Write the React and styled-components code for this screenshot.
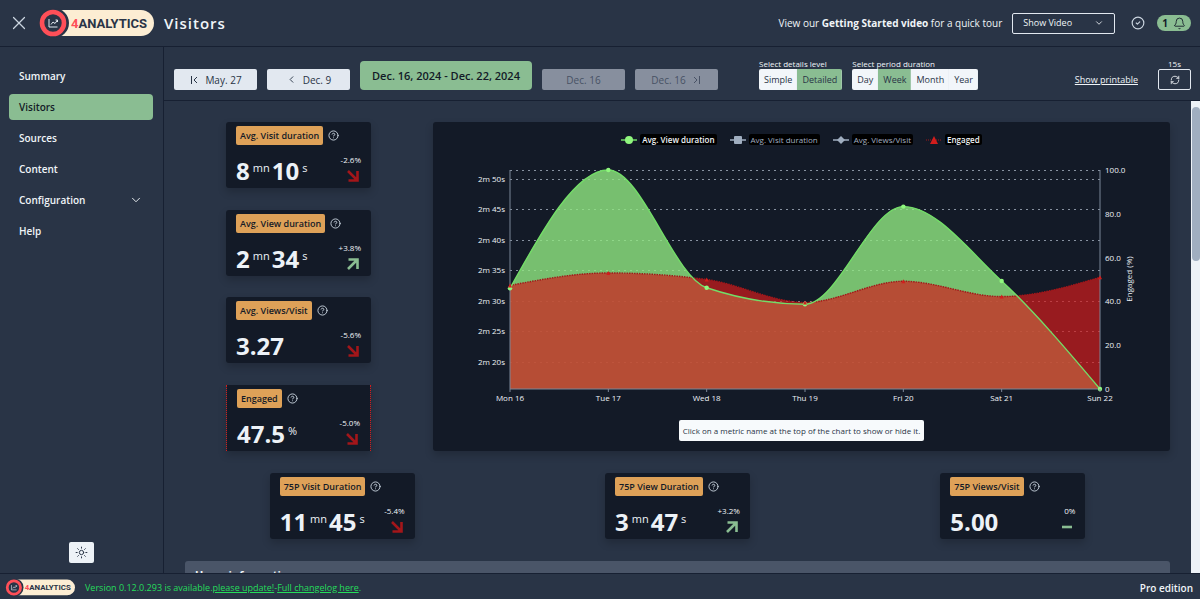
import { useState } from "react";
import { createGlobalStyle, styled } from "styled-components";
import {
  Bell,
  ChevronDown,
  ChevronLeft,
  CircleCheck,
  CircleHelp,
  RefreshCw,
  Sun,
  X,
} from "lucide-react";

const menu = ["Summary", "Visitors", "Sources", "Content", "Configuration", "Help"];

const sideCards = [
  {
    title: "Avg. Visit duration",
    parts: [["8", "mn"], ["10", "s"]],
    change: "-2.6%",
    trend: "down",
  },
  {
    title: "Avg. View duration",
    parts: [["2", "mn"], ["34", "s"]],
    change: "+3.8%",
    trend: "up",
  },
  {
    title: "Avg. Views/Visit",
    parts: [["3.27", ""]],
    change: "-5.6%",
    trend: "down",
  },
  {
    title: "Engaged",
    parts: [["47.5", "%"]],
    change: "-5.0%",
    trend: "down",
    dotted: true,
  },
];

const bottomCards = [
  {
    title: "75P Visit Duration",
    parts: [["11", "mn"], ["45", "s"]],
    change: "-5.4%",
    trend: "down",
  },
  {
    title: "75P View Duration",
    parts: [["3", "mn"], ["47", "s"]],
    change: "+3.2%",
    trend: "up",
  },
  {
    title: "75P Views/Visit",
    parts: [["5.00", ""]],
    change: "0%",
    trend: "flat",
  },
];

const trends = {
  down: { d: "M1 1l9 9M10.5 1v9.500H1.500", color: "#a3161a" },
  up: { d: "M1 11l9-9M1.500 1.500h9V11", color: "#8abd92" },
  flat: { d: "M1 6h10", color: "#8abd92" },
};

const days = ["Mon 16", "Tue 17", "Wed 18", "Thu 19", "Fri 20", "Sat 21", "Sun 22"];
// average view duration, in seconds
const viewDuration = [152, 171.4, 152.1, 149.4, 165.4, 153.2, 135.5];
// engaged visitors, in percent
const engaged = [47.3, 53, 50, 39.5, 49.2, 42.2, 51];

const plot = { left: 77, right: 667, top: 19, bottom: 238 };
const xAt = (i) => plot.left + (i * (plot.right - plot.left)) / 6;
const secondsY = (s) =>
  plot.bottom - ((s - 135.5) / (171.4 - 135.5)) * (plot.bottom - plot.top);
const percentY = (p) => plot.bottom - (p / 100) * (plot.bottom - plot.top);

// monotone cubic through the points, so that the curve never overshoots
function smoothPath(points) {
  const last = points.length - 1;
  const slope = points
    .slice(1)
    .map(([x, y], i) => (y - points[i][1]) / (x - points[i][0]));
  const tangent = points.map((_, i) => {
    const a = slope[i - 1];
    const b = slope[i];
    if (i === 0 || i === last || a * b <= 0) return 0;
    return (
      Math.sign(a) * 2 * Math.min(Math.abs(a), Math.abs(b), Math.abs(a + b) / 4)
    );
  });
  tangent[0] = (3 * slope[0] - tangent[1]) / 2;
  tangent[last] = (3 * slope[last - 1] - tangent[last - 1]) / 2;

  let d = `M${points[0][0]},${points[0][1]}`;
  for (let i = 0; i < last; i++) {
    const [x0, y0] = points[i];
    const [x1, y1] = points[i + 1];
    const dx = (x1 - x0) / 3;
    d += `C${x0 + dx},${y0 + dx * tangent[i]} ${x1 - dx},${
      y1 - dx * tangent[i + 1]
    } ${x1},${y1}`;
  }
  return d;
}

const Logo = ({ small }) => (
  <LogoSvg $small={small} viewBox="0 0 114 28" role="img" aria-label="4Analytics">
    <rect x="6" y="1" width="108" height="26" rx="13" fill="#fcedd3" />
    <circle cx="14" cy="14" r="15" fill="#293446" />
    <circle cx="13" cy="14" r="11" fill="#293446" stroke="#ff4f58" strokeWidth="4.6" />
    <path
      d="M9 10v8h8.500M11 15.500l2-2.500 2 1.500 2.500-3.500M15.500 11h2v2"
      fill="none"
      stroke="#e2e8f0"
      strokeWidth="1"
    />
    <text x="31" y="19" fontSize="13" fontWeight="700" fill="#293446">
      <tspan fill="#ff4f58">4</tspan>ANALYTICS
    </text>
  </LogoSvg>
);

const EdgeIcon = ({ flip }) => (
  <EdgeSvg $flip={flip} viewBox="0 0 10 10">
    <path d="M2.5 1v8M8 2L5 5l3 3" />
  </EdgeSvg>
);

const MetricCard = ({ card }) => (
  <Card $dotted={card.dotted}>
    <CardHead>
      <Badge>{card.title}</Badge>
      <CircleHelp size={11} strokeWidth={2} />
    </CardHead>
    <CardBody>
      <Value>
        {card.parts.map(([number, unit]) => (
          <span key={number}>
            {number}
            {unit && <Unit>{unit}</Unit>}
          </span>
        ))}
      </Value>
      <Change>
        {card.change}
        <svg width="12" height="12" viewBox="0 0 12 12">
          <path
            d={trends[card.trend].d}
            fill="none"
            stroke={trends[card.trend].color}
            strokeWidth="2.6"
          />
        </svg>
      </Change>
    </CardBody>
  </Card>
);

const Choice = ({ legend, name, options, value, onChange }) => (
  <ChoiceSet>
    <legend>{legend}</legend>
    <Segments>
      {options.map((option) => (
        <Segment key={option} $active={option === value}>
          <input
            type="radio"
            name={name}
            checked={option === value}
            onChange={() => onChange(option)}
          />
          {option}
        </Segment>
      ))}
    </Segments>
  </ChoiceSet>
);

const Chart = () => {
  const [shown, setShown] = useState({ view: true, engaged: true });
  const viewPoints = viewDuration.map((v, i) => [xAt(i), secondsY(v)]);
  const engagedPoints = engaged.map((v, i) => [xAt(i), percentY(v)]);
  const viewLine = smoothPath(viewPoints);
  const engagedLine = smoothPath(engagedPoints);
  const close = `L${plot.right},${plot.bottom}L${plot.left},${plot.bottom}Z`;
  const ticks = [140, 145, 150, 155, 160, 165, 170];

  function toggle(key) {
    setShown((prev) => ({ ...prev, [key]: !prev[key] }));
  }

  return (
    <ChartPanel>
      <Legend>
        <LegendItem $on={shown.view} onClick={() => toggle("view")}>
          <svg width="16" height="10" viewBox="0 0 16 10">
            <path d="M0 5h16" stroke="#6fd866" strokeWidth="1.5" />
            <circle cx="8" cy="5" r="4" fill="#90f77e" />
          </svg>
          <span>Avg. View duration</span>
        </LegendItem>
        <LegendItem $on={shown.visit} onClick={() => toggle("visit")}>
          <svg width="16" height="10" viewBox="0 0 16 10">
            <path d="M0 5h16" stroke="#a0aec0" strokeWidth="1.5" />
            <rect x="4" y="1" width="8" height="8" rx="1" fill="#a0aec0" />
          </svg>
          <span>Avg. Visit duration</span>
        </LegendItem>
        <LegendItem $on={shown.pages} onClick={() => toggle("pages")}>
          <svg width="16" height="10" viewBox="0 0 16 10">
            <path d="M0 5h16" stroke="#a0aec0" strokeWidth="1.5" />
            <path d="M8 1l4 4-4 4-4-4z" fill="#a0aec0" />
          </svg>
          <span>Avg. Views/Visit</span>
        </LegendItem>
        <LegendItem $on={shown.engaged} onClick={() => toggle("engaged")}>
          <svg width="16" height="10" viewBox="0 0 16 10">
            <path d="M0 5h16" stroke="#a3161a" strokeDasharray="1 1" />
            <path d="M8 1l4 8H4z" fill="#d21d1c" />
          </svg>
          <span>Engaged</span>
        </LegendItem>
      </Legend>
      <ChartSvg viewBox="0 0 737 260">
        {[...ticks.map(secondsY), plot.top].map((y) => (
          <path
            key={y}
            d={`M${plot.left},${Math.round(y) + 0.5}H${plot.right}`}
            stroke="#8791a0"
            strokeDasharray="2 4"
          />
        ))}
        {shown.view && <path d={viewLine + close} fill="#91e882" fillOpacity="0.8" />}
        {shown.engaged && (
          <>
            <path d={engagedLine + close} fill="#d21d1c" fillOpacity="0.7" />
            <path
              d={engagedLine}
              fill="none"
              stroke="#a3161a"
              strokeWidth="1.4"
              strokeDasharray="1.5 1"
            />
          </>
        )}
        {shown.view && <path d={viewLine} fill="none" stroke="#73dd68" strokeWidth="1.4" />}
        <path
          d={`M${plot.left},${plot.top}V${plot.bottom}H${plot.right}V${plot.top}`}
          fill="none"
          stroke="#7b8698"
        />
        {shown.view &&
          viewPoints.map(([x, y]) => <circle key={x} cx={x} cy={y} r="2.2" fill="#90f77e" />)}
        {shown.engaged &&
          engagedPoints.map(([x, y]) => (
            <path key={x} d={`M${x},${y - 2}l2,4h-4z`} fill="#d21d1c" />
          ))}
        {ticks.map((s) => (
          <text key={s} x="72" y={secondsY(s) + 3} textAnchor="end">
            2m {s - 120}s
          </text>
        ))}
        {[0, 20, 40, 60, 80, 100].map((p) => (
          <text key={p} x="672" y={percentY(p) + 3}>
            {p ? p.toFixed(1) : 0}
          </text>
        ))}
        {days.map((day, i) => (
          <g key={day}>
            <path d={`M${xAt(i)},${plot.bottom}v3`} stroke="#7b8698" />
            <text x={xAt(i)} y="250" textAnchor="middle">
              {day}
            </text>
          </g>
        ))}
        <text transform="translate(699 128) rotate(-90)" textAnchor="middle">
          Engaged (%)
        </text>
      </ChartSvg>
      <Hint>Click on a metric name at the top of the chart to show or hide it.</Hint>
    </ChartPanel>
  );
};

const App = () => {
  const [page, setPage] = useState("Visitors");
  const [level, setLevel] = useState("Detailed");
  const [period, setPeriod] = useState("Week");

  return (
    <Page>
      <GlobalStyle />
      <Header>
        <IconBtn aria-label="Close">
          <X size={22} strokeWidth={1.3} />
        </IconBtn>
        <Logo />
        <h1>{page}</h1>
        <Tour>
          <label htmlFor="video">
            View our <b>Getting Started video</b> for a quick tour
          </label>
          <SelectBox>
            <select id="video">
              <option>Show Video</option>
            </select>
            <ChevronDown size={10} />
          </SelectBox>
        </Tour>
        <IconBtn aria-label="Status">
          <CircleCheck size={14} strokeWidth={2} />
        </IconBtn>
        <Alerts aria-label="Notifications">
          1 <Bell size={13} strokeWidth={1.6} />
        </Alerts>
      </Header>

      <Main>
        <Sidebar>
          <nav>
            {menu.map((item) => (
              <MenuLink
                key={item}
                href={`#${item}`}
                $active={item === page}
                onClick={() => setPage(item)}
              >
                {item}
                {item === "Configuration" && <ChevronDown size={14} strokeWidth={1.6} />}
              </MenuLink>
            ))}
          </nav>
          <ThemeBtn aria-label="Theme">
            <Sun size={13} strokeWidth={1.8} />
          </ThemeBtn>
        </Sidebar>

        <Content>
          <Toolbar>
            <DateBtn>
              <EdgeIcon /> May. 27
            </DateBtn>
            <DateBtn>
              <ChevronLeft size={11} /> Dec. 9
            </DateBtn>
            <RangeBtn>Dec. 16, 2024 - Dec. 22, 2024</RangeBtn>
            <DateBtn disabled>Dec. 16</DateBtn>
            <DateBtn disabled>
              Dec. 16 <EdgeIcon flip />
            </DateBtn>
            <Filters>
              <Choice
                legend="Select details level"
                name="level"
                options={["Simple", "Detailed"]}
                value={level}
                onChange={setLevel}
              />
              <Choice
                legend="Select period duration"
                name="period"
                options={["Day", "Week", "Month", "Year"]}
                value={period}
                onChange={setPeriod}
              />
            </Filters>
            <PrintLink href="#print">Show printable</PrintLink>
            <Refresh>
              15s
              <button aria-label="Refresh">
                <RefreshCw size={10} />
              </button>
            </Refresh>
          </Toolbar>

          <Body>
            <Board>
              <Overview>
                <CardColumn>
                  {sideCards.map((card) => (
                    <MetricCard key={card.title} card={card} />
                  ))}
                </CardColumn>
                <Chart />
              </Overview>
              <CardRow>
                {bottomCards.map((card) => (
                  <MetricCard key={card.title} card={card} />
                ))}
              </CardRow>
              <Section>
                <h2>Users information</h2>
              </Section>
            </Board>
            <ScrollTrack>
              <ScrollThumb />
            </ScrollTrack>
          </Body>
        </Content>
      </Main>

      <Footer>
        <Logo small />
        <p>
          Version 0.12.0.293 is available.<a href="#update">please update!</a>-
          <a href="#changelog">Full changelog here</a>.
        </p>
        <strong>Pro edition</strong>
      </Footer>
    </Page>
  );
};
export default App;

const GlobalStyle = createGlobalStyle`
  * {
    box-sizing: border-box;
  }
  body {
    margin: 0;
    background-color: #293446;
    color: #f0f4f8;
    font-family: "Open Sans", "Noto Sans", sans-serif;
    font-size: 10px;
    line-height: 16px;
  }
  button, select, input {
    font: inherit;
    color: inherit;
  }
  button {
    cursor: pointer;
  }
  svg {
    flex-shrink: 0;
  }
`;

const Page = styled.div`
  height: 100vh;
  display: flex;
  flex-direction: column;
`;

const Header = styled.header`
  flex: 0 0 47px;
  display: flex;
  align-items: center;
  padding: 0 9px 0 8px;
  border-bottom: 1px solid #172032;
  h1 {
    margin: 0 auto 0 10px;
    font-size: 15px;
    font-weight: 600;
    letter-spacing: 1px;
  }
`;

const IconBtn = styled.button`
  display: flex;
  padding: 0;
  border: 0;
  background: none;
  color: #cbd5e0;
`;

const LogoSvg = styled.svg`
  width: ${(props) => (props.$small ? "69px" : "114px")};
  margin-left: ${(props) => (props.$small ? "0" : "10px")};
  overflow: visible;
  font-family: Roboto, sans-serif;
`;

const Tour = styled.div`
  display: flex;
  align-items: center;
  gap: 10px;
  margin-right: 16px;
`;

const SelectBox = styled.div`
  display: flex;
  align-items: center;
  position: relative;
  select {
    appearance: none;
    width: 103px;
    height: 21px;
    padding: 0 10px;
    border: 1px solid #e2e8f0;
    border-radius: 2px;
    background: none;
    font-size: 9px;
  }
  svg {
    position: absolute;
    right: 11px;
    pointer-events: none;
  }
`;

const Alerts = styled.button`
  display: flex;
  align-items: center;
  gap: 5px;
  height: 16px;
  margin-left: 12px;
  padding: 0 5px;
  border: 0;
  border-radius: 8px;
  background-color: #8abd92;
  color: #131a27;
  font-weight: 700;
`;

const Main = styled.div`
  flex: 1;
  min-height: 0;
  display: flex;
`;

const Sidebar = styled.aside`
  flex: 0 0 164px;
  display: flex;
  flex-direction: column;
  justify-content: space-between;
  align-items: center;
  padding: 16px 10px 10px 9px;
  border-right: 1px solid #172032;
  nav {
    width: 100%;
    display: flex;
    flex-direction: column;
    gap: 5px;
  }
`;

const MenuLink = styled.a`
  display: flex;
  align-items: center;
  justify-content: space-between;
  height: 26px;
  padding: 0 10px;
  border-radius: 4px;
  background-color: ${(props) => (props.$active ? "#8abd92" : "transparent")};
  color: ${(props) => (props.$active ? "#131a27" : "#f0f4f8")};
  font-weight: 600;
  text-decoration: none;
`;

const ThemeBtn = styled.button`
  display: flex;
  align-items: center;
  justify-content: center;
  width: 25px;
  height: 21px;
  padding: 0;
  border: 0;
  border-radius: 2px;
  background-color: #edf2f7;
  color: #293446;
`;

const Content = styled.main`
  flex: 1;
  min-width: 0;
  display: flex;
  flex-direction: column;
`;

const Toolbar = styled.div`
  flex: 0 0 54px;
  display: flex;
  align-items: flex-end;
  gap: 10px;
  padding: 0 9px 10px 10px;
  border-bottom: 1px solid #172032;
`;

const DateBtn = styled.button`
  display: flex;
  align-items: center;
  justify-content: center;
  gap: 6px;
  width: 83px;
  height: 21px;
  padding: 0;
  border: 0;
  border-radius: 2px;
  background-color: #e2e8f0;
  color: #293446;
  &:disabled {
    background-color: #878f9e;
    color: #485265;
  }
`;

const RangeBtn = styled.button`
  width: 172px;
  height: 29px;
  padding: 0;
  border: 0;
  border-radius: 4px;
  background-color: #8abd92;
  color: #131a27;
  font-size: 11px;
  font-weight: 600;
  white-space: nowrap;
`;

const EdgeSvg = styled.svg`
  width: 10px;
  height: 10px;
  fill: none;
  stroke: currentColor;
  transform: ${(props) => (props.$flip ? "scaleX(-1)" : "none")};
`;

const Filters = styled.div`
  display: flex;
  gap: 10px;
  margin: 0 auto 0 31px;
`;

const ChoiceSet = styled.fieldset`
  min-width: 0;
  margin: 0;
  padding: 0;
  border: 0;
  legend {
    padding: 0;
    font-size: 8px;
    line-height: 11px;
    white-space: nowrap;
  }
`;

const Segments = styled.div`
  display: flex;
  border-radius: 2px;
  overflow: hidden;
`;

const Segment = styled.label`
  height: 21px;
  padding: 0 5px;
  background-color: ${(props) => (props.$active ? "#8abd92" : "#f2f6fa")};
  box-shadow: inset -1px 0 #dde4ec44;
  color: #293446;
  font-size: 9px;
  line-height: 21px;
  input {
    appearance: none;
    position: absolute;
    margin: 0;
  }
`;

const PrintLink = styled.a`
  margin-right: 10px;
  color: inherit;
  font-size: 9px;
  line-height: 21px;
`;

const Refresh = styled.div`
  display: flex;
  flex-direction: column;
  align-items: center;
  font-size: 8px;
  line-height: 11px;
  button {
    display: flex;
    align-items: center;
    justify-content: center;
    width: 33px;
    height: 21px;
    padding: 0;
    border: 1px solid #e2e8f0;
    border-radius: 2px;
    background: none;
  }
`;

const Body = styled.div`
  flex: 1;
  min-height: 0;
  display: flex;
`;

const Board = styled.div`
  flex: 1;
  min-width: 0;
  display: flex;
  flex-direction: column;
  gap: 22px;
  padding: 21px 21px 0;
  overflow: hidden;
`;

const Overview = styled.div`
  display: grid;
  grid-template-columns: 227px minmax(0, 1fr);
  gap: 21px;
`;

const CardColumn = styled.div`
  display: flex;
  flex-direction: column;
  justify-content: space-between;
  align-items: center;
  gap: 21px;
`;

const CardRow = styled.div`
  display: grid;
  grid-template-columns: repeat(3, 1fr);
  gap: 21px;
  justify-items: center;
`;

const Card = styled.section`
  width: 145px;
  height: 66px;
  padding: 4px 10px 0;
  border: ${(props) => (props.$dotted ? "dotted #d21d1c" : "solid #131a27")};
  border-width: ${(props) => (props.$dotted ? "0 1px" : "0")};
  border-radius: ${(props) => (props.$dotted ? "0" : "3px")};
  background-color: #131a27;
  background-clip: padding-box;
  box-shadow: 0 4px 8px rgba(0, 0, 0, 0.2);
`;

const CardHead = styled.div`
  display: flex;
  align-items: center;
  gap: 5px;
  color: #cbd5e0;
`;

const Badge = styled.span`
  padding: 0 4px;
  border-radius: 2px;
  background-color: #dea158;
  color: #131a27;
  font-size: 9px;
  font-weight: 600;
  line-height: 19px;
  white-space: nowrap;
`;

const CardBody = styled.div`
  display: flex;
  justify-content: space-between;
  padding-top: 9px;
`;

const Value = styled.div`
  display: flex;
  gap: 2px;
  color: #edf2f7;
  font-size: 24px;
  font-weight: 700;
  line-height: 34px;
`;

const Unit = styled.sup`
  margin-left: 3px;
  font-size: 11px;
  font-weight: 400;
  line-height: 0;
  vertical-align: 8px;
`;

const Change = styled.div`
  display: flex;
  flex-direction: column;
  align-items: flex-end;
  font-size: 8px;
  line-height: 11px;
  svg {
    margin: 5px 2px 0 0;
  }
`;

const ChartPanel = styled.section`
  display: flex;
  flex-direction: column;
  align-items: center;
  padding: 12px 0 10px;
  border-radius: 3px;
  background-color: #131a27;
  box-shadow: 0 4px 8px rgba(0, 0, 0, 0.2);
`;

const Legend = styled.div`
  display: flex;
  gap: 13px;
`;

const LegendItem = styled.button`
  display: flex;
  align-items: center;
  gap: 3px;
  padding: 0;
  border: 0;
  background: none;
  color: ${(props) => (props.$on ? "#f0f4f8" : "#a0aec0")};
  font-size: 8px;
  font-weight: ${(props) => (props.$on ? 600 : 400)};
  line-height: 11px;
  span {
    padding: 0 2px;
    border-radius: 2px;
    background-color: #000;
  }
`;

const ChartSvg = styled.svg`
  width: 100%;
  height: auto;
  margin-top: 6px;
  font-size: 8px;
  text {
    fill: #edf2f7;
  }
`;

const Hint = styled.p`
  margin: 9px 0 0;
  padding: 0 4px;
  border-radius: 2px;
  background-color: #f7fafc;
  color: #293446;
  font-size: 8px;
  line-height: 21px;
`;

const Section = styled.section`
  flex-shrink: 0;
  padding: 4px 10px;
  border-radius: 3px 3px 0 0;
  background-color: #4a5568;
  h2 {
    margin: 0;
    font-size: 11px;
    font-weight: 700;
    line-height: 20px;
  }
`;

const ScrollTrack = styled.div`
  flex: 0 0 9px;
  padding: 6px 0 0 1px;
  background-color: #edf2f7;
`;

const ScrollThumb = styled.div`
  height: 154px;
  border-radius: 4px;
  background-color: #a0aec0;
`;

const Footer = styled.footer`
  flex: 0 0 26px;
  display: flex;
  align-items: center;
  gap: 10px;
  padding: 2px 7px 0 6px;
  border-top: 1px solid #172032;
  p {
    flex: 1;
    margin: 0;
    color: #25dd5b;
    font-size: 9px;
  }
  a {
    color: inherit;
  }
  strong {
    font-weight: 600;
  }
`;
